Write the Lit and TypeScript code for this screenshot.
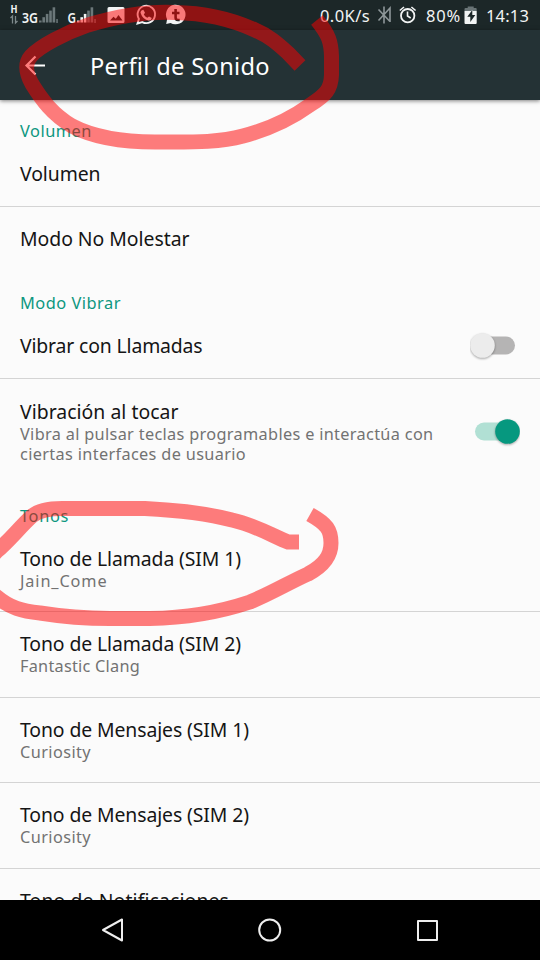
import { LitElement, html, css, svg, nothing } from "lit";
import { customElement, property } from "lit/decorators.js";

/** Text tracked so that it spans a given width. */
@customElement("fit-text")
class FitText extends LitElement {
  static styles = css`
    :host { display: inline-block; white-space: pre; }
  `;
  @property() text = "";
  @property({ type: Number }) span = 0;

  render() {
    return html`<span>${this.text}</span>`;
  }

  updated() {
    const el = this.renderRoot.querySelector("span") as HTMLElement;
    el.style.letterSpacing = "0px";
    const natural = el.getBoundingClientRect().width;
    if (this.span && natural) {
      el.style.letterSpacing = `${(this.span - natural) / this.text.length}px`;
    }
  }
}

@customElement("toggle-switch")
class ToggleSwitch extends LitElement {
  static styles = css`
    :host { display: block; width: 50px; height: 30px; }
    .track { fill: #b5b4b4; }
    .thumb { fill: #ececec; }
    .on .track { fill: #b1e0d4; }
    .on .thumb { fill: #06987f; }
    .thumb { filter: drop-shadow(0 1px 1px rgba(0, 0, 0, 0.35)); }
  `;
  @property({ type: Boolean }) on = false;

  render() {
    return html`<svg class=${this.on ? "on" : "off"} width="50" height="30">
      <rect class="track" x="5" y="5.5" width="40" height="18" rx="9" />
      <circle class="thumb" cx=${this.on ? 37.5 : 12.5} cy="14.5" r="12.3" />
    </svg>`;
  }
}

type Line = [string, number];
interface Row { title: Line; summary?: Line[]; toggle?: boolean; last?: boolean; }
interface Section { name: Line; rows: Row[]; }

const sections: Section[] = [
  { name: ["Volumen", 72], rows: [{ title: ["Volumen", 80.5] }, { title: ["Modo No Molestar", 169.5] }] },
  {
    name: ["Modo Vibrar", 101],
    rows: [
      { title: ["Vibrar con Llamadas", 182.5], toggle: false },
      {
        title: ["Vibración al tocar", 158.5],
        summary: [
          ["Vibra al pulsar teclas programables e interactúa con", 413.5],
          ["ciertas interfaces de usuario", 226],
        ],
        toggle: true,
      },
    ],
  },
  {
    name: ["Tonos", 49],
    rows: [
      { title: ["Tono de Llamada (SIM 1)", 221], summary: [["Jain_Come", 87.5]] },
      { title: ["Tono de Llamada (SIM 2)", 221], summary: [["Fantastic Clang", 120]] },
      { title: ["Tono de Mensajes (SIM 1)", 229], summary: [["Curiosity", 71]] },
      { title: ["Tono de Mensajes (SIM 2)", 229], summary: [["Curiosity", 71]] },
      { title: ["Tono de Notificaciones", 209], last: true },
    ],
  },
];

const rowKind = (r: Row) => (r.last ? "last" : ["", "two", "three"][r.summary?.length ?? 0]);

const fit = ([text, span]: Line, cls: string) =>
  html`<fit-text class=${cls} .text=${text} .span=${span}></fit-text>`;

const bars = (x: number, lit: number) =>
  [0, 1, 2, 3, 4].map(
    (i) => svg`<rect class=${i < lit ? "lit" : "dim"} x=${x + i * 3.4} y=${20.5 - i * 3.3} width="2.6" height=${2 + i * 3.3} />`
  );

@customElement("app-root")
class AppRoot extends LitElement {
  static styles = css`
    :host {
      display: flex;
      flex-direction: column;
      position: relative;
      width: 540px;
      height: 960px;
      overflow: hidden;
      background: #fbfbfb;
      color: #151515;
      font-family: "Noto Sans", "Open Sans", sans-serif;
    }
    .status {
      flex: none;
      display: flex;
      align-items: center;
      height: 30px;
      background: #1c2728;
      color: #f2f4f4;
      font-size: 16.5px;
      line-height: 30px;
    }
    .status svg { flex: none; display: block; }
    .status fit-text { padding-top: 2px; line-height: 28px; }
    .lead { width: 320px; }
    .speed { width: 56px; }
    .pct { width: 38px; }
    .lit { fill: #f2f4f4; }
    .dim { fill: #6c787a; }
    .tiny { fill: #f2f4f4; font-size: 11px; font-weight: 700; }
    .net { fill: #f2f4f4; font-size: 15px; font-weight: 600; }
    .bar {
      flex: none;
      z-index: 1;
      display: flex;
      align-items: center;
      height: 70px;
      padding-left: 20px;
      gap: 40px;
      background: #243235;
      color: #fff;
      box-shadow: 0 1px 4px rgba(0, 0, 0, 0.5);
    }
    .heading { font-size: 23.6px; line-height: 32px; padding-top: 2px; }
    .list { flex: 1; min-height: 0; overflow: hidden; }
    .section {
      display: flex;
      align-items: flex-end;
      box-sizing: border-box;
      height: 43px;
      padding: 0 20px;
      color: #0d9780;
      font-size: 16.4px;
      line-height: 22px;
    }
    .section:first-child { height: 42px; }
    .row {
      display: flex;
      align-items: center;
      box-sizing: border-box;
      height: 64px;
      padding: 0 20px;
    }
    .row.two { height: 84px; }
    .row + .row { border-top: 1px solid #d4d4d4; height: 65px; }
    .row.two + .row.two { height: 85.5px; }
    .row + .row.three { height: 106px; }
    .row + .row.last { height: 85.5px; align-items: flex-start; padding-top: 20px; }
    .body { flex: 1; display: flex; flex-direction: column; align-items: flex-start; }
    .title { font-size: 19.4px; line-height: 24px; }
    .summary { color: #727272; font-size: 16.3px; line-height: 20px; }
    .nav {
      flex: none;
      display: flex;
      align-items: center;
      justify-content: center;
      gap: 127px;
      height: 60px;
      background: #000;
    }
    .nav svg { fill: none; stroke: #eee; stroke-width: 2; stroke-linejoin: round; }
    .marks {
      position: absolute;
      inset: 0;
      z-index: 2;
      fill: none;
      stroke: rgba(255, 0, 0, 0.51);
      stroke-width: 15;
      stroke-linejoin: round;
      pointer-events: none;
    }
  `;

  render() {
    return html`
      <div class="status">
        <svg class="lead" width="320" height="30">
          <text class="tiny" x="10.500" y="13" textLength="7" lengthAdjust="spacingAndGlyphs">H</text>
          <path d="M12.500 23.500V16l-2 2M15.500 16v7l2-2" fill="none" stroke="#7d898b" stroke-width="1.300" />
          <text class="net" x="22" y="22.500" textLength="16" lengthAdjust="spacingAndGlyphs">3G</text>
          ${bars(39, 0)}<rect class="dim" x="56.300" y="19" width="1.500" height="4" />
          <text class="net" x="67.500" y="22.500" textLength="8.500" lengthAdjust="spacingAndGlyphs">G</text>
          ${bars(77, 3)}<rect class="dim" x="94.300" y="19" width="1.500" height="4" />
          <path class="lit" fill-rule="evenodd" d="M109 7h14q1.500 0 1.500 1.500v13q0 1.500-1.500 1.500h-14q-1.500 0-1.500-1.500v-13q0-1.500 1.500-1.500zM110 20.500h12.500l-4-5.500-2.700 3.700-2.300-2z" />
          <path d="M137.500 23.500l1.400-4.600a8.700 8.700 0 1 1 3.400 3.200z" fill="none" stroke="#f2f4f4" stroke-width="1.900" />
          <path class="lit" d="M143.300 9.700l1.700 3-1.200 1.700q1.300 2.200 3.500 3.300l1.700-1.300 2.800 1.500q-.5 2.500-3 2.500-6-.5-8.300-7.700 0-2.500 2.800-3z" />
          <path class="lit" d="M166.200 24l.9-4.800a9.800 9.800 0 1 1 3.500 3.700z" />
          <path d="M175.600 9v8.500q0 2.500 2.300 2.500h1.800M172 13h7.500" fill="none" stroke="#1c2728" stroke-width="2.600" />
        </svg>
        <div class="speed">${fit(["0.0K/s", 50], "")}</div>
        <svg width="50" height="30" fill="none">
          <path d="M2.500 9.500l11 11.500M2.500 20.500L14 8v14M8 6.500v17" stroke="#8e9799" stroke-width="1.600" />
          <g stroke="#f2f4f4" stroke-width="1.800">
            <circle cx="31.700" cy="15.700" r="6.700" />
            <path d="M31.500 11.500v4.500l3.200 2M23.800 10.500l4.200-3.500M39.600 10.500l-4.200-3.500" stroke-width="1.600" />
          </g>
        </svg>
        <div class="pct">${fit(["80%", 35], "")}</div>
        <svg width="22" height="30">
          <path fill="#697476" d="M.5 11V9q0-1 1-1h2.200V6.500h6V8h2q1 0 1 1v2z" />
          <path class="lit" fill-rule="evenodd" d="M.5 11h12.200v12q0 1-1 1H1.500q-1 0-1-1zM8.300 10l-5 6.800h3V22l5-7h-3z" />
        </svg>
        ${fit(["14:13", 43], "")}
      </div>
      <div class="bar">
        <svg width="30" height="30" fill="none" stroke="#fff" stroke-width="2.200">
          <path d="M25 15.500H7M15.500 6.500L6.500 15.500l9 9" />
        </svg>
        ${fit(["Perfil de Sonido", 180], "heading")}
      </div>
      <div class="list">
        ${sections.map(
          (s) => html`
            <div class="section">${fit(s.name, "")}</div>
            ${s.rows.map(
              (r) => html`<div class="row ${rowKind(r)}">
                <div class="body">
                  ${fit(r.title, "title")} ${r.summary?.map((l) => fit(l, "summary"))}
                </div>
                ${r.toggle === undefined ? nothing : html`<toggle-switch ?on=${r.toggle}></toggle-switch>`}
              </div>`
            )}
          `
        )}
      </div>
      <div class="nav">
        <svg width="30" height="30"><path d="M18 4.500v21L-1 15z" transform="translate(6)" /></svg>
        <svg width="30" height="30"><circle cx="14.700" cy="15" r="10.500" /></svg>
        <svg width="30" height="30"><rect x="6" y="6" width="19" height="19" /></svg>
      </div>
      <svg class="marks" width="540" height="960">
        <path d="M300 65.500L288 53C277 43 269 36 255 30C233 20 205 13 175 12.500C145 11 115 17 88 25C65 33 40 46 31 56C24 64 26 73 32 84C42 100 52 114 72 126C95 138 125 142 155 142C190 142 218 143 243 136C270 129 292 118 310 105C326 95 331 89 331.500 75V56C331 42 329 35 317 20" />
        <path d="M299 542H288C275 537 255 525 232 520C205 513 175 510 145 508.500H62C46 508.500 38 511 32 516C20 527 8 542-3 551C-17 565-17 586-3 597C10 608 22 611 40 613C65 617 85 618.500 110 618.500H150C190 618 220 612 250 602C272 593 288 583 308 574C325 565 331 555 331 543C331 530 327 524 310 514.500" />
      </svg>
    `;
  }
}
